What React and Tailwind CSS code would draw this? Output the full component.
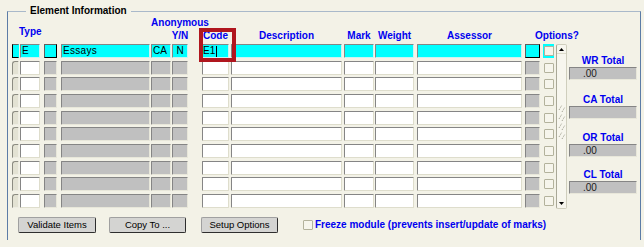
import React from "react";

// column geometry shared by the header row and the data rows
const COLS = {
  ind: "ml-[4px] w-[7px]",
  type: "ml-[1px] w-[20px]",
  box: "ml-[4px] w-[13px]",
  essays: "ml-[4px] w-[89px]",
  ca: "ml-[1px] w-[20px]",
  n: "ml-[1px] w-[16px]",
  code: "ml-[14px] w-[27px]",
  desc: "ml-[2px] w-[111px]",
  mark: "ml-[2px] w-[30px]",
  weight: "ml-[1px] w-[39px]",
  assessor: "ml-[3px] w-[105px]",
  box2: "ml-[3px] w-[15px]",
  chk: "ml-[3px] w-[11px]",
};

const TONE = {
  white: "bg-white border border-[#deddcc] border-t-[#858585] border-l-[#858585] rounded-[1px]",
  gray: "bg-[#c0c0c0] border border-[#e8e7da] border-t-[#858585] border-l-[#858585] rounded-[1px]",
  cyan: "bg-[#00ffff] border border-[#c8f4f4] border-t-[#858585] border-l-[#858585] rounded-[1px]",
  cyanKey: "bg-[#00ffff] border border-black border-t-[#606060] border-l-[#606060]",
  ind: "bg-[#e3e2d3] border border-[#efeee4] border-t-[#8c8c82] border-l-[#8c8c82] rounded-tl-[3px]",
  indCyan: "bg-[#00ffff] border border-black border-t-[#606060] border-r-[#00ffff]",
  none: "",
};

function Cell({ col, tone, className = "", children }) {
  return (
    <div className={`${COLS[col]} ${TONE[tone]} ${className} h-full shrink-0 flex items-center text-[10px] leading-[12px] text-black overflow-hidden whitespace-nowrap`}>
      {children}
    </div>
  );
}

function Check() {
  return <div className="w-[10px] h-[10px] border border-[#b3b29c] bg-[#f6f5ec] rounded-[1px]" />;
}

function Row({ first }) {
  return (
    <div className="flex h-[14px]">
      <Cell col="ind" tone={first ? "indCyan" : "ind"} />
      <Cell col="type" tone={first ? "cyan" : "white"} className="pl-[1px]">{first && "E"}</Cell>
      <Cell col="box" tone={first ? "cyanKey" : "gray"} />
      <Cell col="essays" tone={first ? "cyan" : "gray"} className="pl-[1px] tracking-[0.3px]">{first && "Essays"}</Cell>
      <Cell col="ca" tone={first ? "cyan" : "gray"} className="pl-[1px]">{first && "CA"}</Cell>
      <Cell col="n" tone={first ? "cyan" : "gray"} className="justify-center">{first && "N"}</Cell>
      <Cell col="code" tone={first ? "cyan" : "white"}>
        {first && (
          <>
            <span>E1</span>
            <span className="ml-[1px] w-[1px] h-[11px] bg-black" />
          </>
        )}
      </Cell>
      <Cell col="desc" tone={first ? "cyan" : "white"} />
      <Cell col="mark" tone={first ? "cyan" : "white"} />
      <Cell col="weight" tone={first ? "cyan" : "white"} />
      <Cell col="assessor" tone={first ? "cyan" : "white"} />
      <Cell col="box2" tone={first ? "cyanKey" : "gray"} />
      <Cell col="chk" tone="none" className={first ? "bg-[#00ffff] justify-center" : "justify-center"}>
        <Check />
      </Cell>
    </div>
  );
}

function Head({ col, className = "", children }) {
  return (
    <div className={`${COLS[col]} shrink-0 h-full flex flex-col justify-end text-[10px] leading-[12px] font-bold text-[#0000f0] whitespace-nowrap ${className}`}>
      {children}
    </div>
  );
}

function Total({ label, value, className = "" }) {
  return (
    <div className={className}>
      <div className="text-center text-[10px] leading-[12px] font-bold text-[#0000f0]">{label}</div>
      <div className="h-[13px] bg-[#c0c0c0] border border-[#e8e7da] border-t-[#858585] border-l-[#858585] pl-[13px] text-[10px] leading-[11px] text-[#202020]">
        {value}
      </div>
    </div>
  );
}

function Scrollbar() {
  return (
    <div className="ml-[2px] mt-[27px] w-[11px] h-[165px] shrink-0 flex flex-col border border-[#cfcebd] border-l-[#a9a897] rounded-[2px] bg-[#f7f6ee]">
      <div className="h-[9px] flex items-center justify-center border-b border-[#dddccb]">
        <svg width="5" height="3" viewBox="0 0 5 3">
          <polygon points="2.5,0 5,3 0,3" fill="#000" />
        </svg>
      </div>
      <div className="flex-1 flex items-center justify-center">
        <svg width="8" height="37" viewBox="0 0 8 37" className="mb-[10px]">
          {[2, 11, 20, 29].map((y) => (
            <g key={y} stroke="#9a9a8a" strokeWidth="1" strokeDasharray="1 1">
              <line x1="1" y1={y + 5} x2="4" y2={y} />
              <line x1="4" y1={y + 7} x2="7" y2={y + 2} />
            </g>
          ))}
        </svg>
      </div>
      <div className="h-[9px] flex items-center justify-center">
        <svg width="5" height="3" viewBox="0 0 5 3">
          <polygon points="0,0 5,0 2.5,3" fill="#000" />
        </svg>
      </div>
    </div>
  );
}

function Button({ className = "", children }) {
  return (
    <button className={`h-[16px] shrink-0 bg-[#d4d4d2] border border-[#2e2e2e] border-t-[#a0a0a0] border-l-[#a0a0a0] rounded-[2px] text-[9.5px] leading-[12px] text-black ${className}`}>
      {children}
    </button>
  );
}

export default function App() {
  const rows = Array.from({ length: 10 }, (_, i) => i);

  return (
    <div className="relative w-[644px] h-[247px] bg-[#f3f2e7] pt-[5px] font-['Liberation_Sans',Arial,sans-serif] overflow-hidden">
      <fieldset className="ml-[7px] w-[634px] border border-b-0 border-[#a9b9ca] border-l-[#5c7ca6] border-r-[#5c7ca6] pb-[7px]">
        <legend className="ml-[18px] px-[4px] text-[10px] leading-[12px] font-bold text-black">
          Element Information
        </legend>

        <div className="flex items-start">
          {/* grid: header + rows */}
          <div className="flex flex-col">
            <div className="flex h-[27px]">
              <Head col="ind" />
              <Head col="type" className="pb-[6px]">
                <span className="-ml-[1px]">Type</span>
              </Head>
              <Head col="box" />
              <Head col="essays" />
              <Head col="ca" />
              <Head col="n" className="items-center pb-[2px]">
                <span>Anonymous</span>
                <span className="mt-[1px]">Y/N</span>
              </Head>
              <Head col="code" className="pb-[2px]">
                <span className="pl-[1px]">Code</span>
              </Head>
              <Head col="desc" className="items-center pb-[2px]">Description</Head>
              <Head col="mark" className="items-center pb-[2px]">Mark</Head>
              <Head col="weight" className="items-center pb-[2px]">Weight</Head>
              <Head col="assessor" className="items-center pb-[2px]">Assessor</Head>
              <Head col="box2" />
              <Head col="chk" className="pb-[2px]">
                <span className="-ml-[8px]">Options?</span>
              </Head>
            </div>
            <div className="flex flex-col justify-between h-[164px]">
              {rows.map((i) => (
                <Row key={i} first={i === 0} />
              ))}
            </div>
          </div>

          <Scrollbar />

          {/* totals */}
          <div className="ml-[2px] mt-[38px] w-[68px] shrink-0 flex flex-col">
            <Total label="WR Total" value=".00" />
            <Total label="CA Total" value="" className="mt-[14px]" />
            <Total label="OR Total" value=".00" className="mt-[13px]" />
            <Total label="CL Total" value=".00" className="mt-[12px]" />
          </div>
        </div>

        <div className="flex items-center mt-[8px]">
          <Button className="ml-[10px] w-[78px]">Validate Items</Button>
          <Button className="ml-[13px] w-[77px]">Copy To ...</Button>
          <Button className="ml-[15px] w-[77px]">Setup Options</Button>
          <div className="ml-[25px]">
            <Check />
          </div>
          <span className="ml-[2px] text-[10px] leading-[12px] font-bold text-[#0000f0] whitespace-nowrap">
            Freeze module (prevents insert/update of marks)
          </span>
        </div>
      </fieldset>

      {/* red annotation around the Code column */}
      <div className="absolute left-[199px] top-[28px] w-[37px] h-[34px] border-[4px] border-[#b0161e]" />
    </div>
  );
}
